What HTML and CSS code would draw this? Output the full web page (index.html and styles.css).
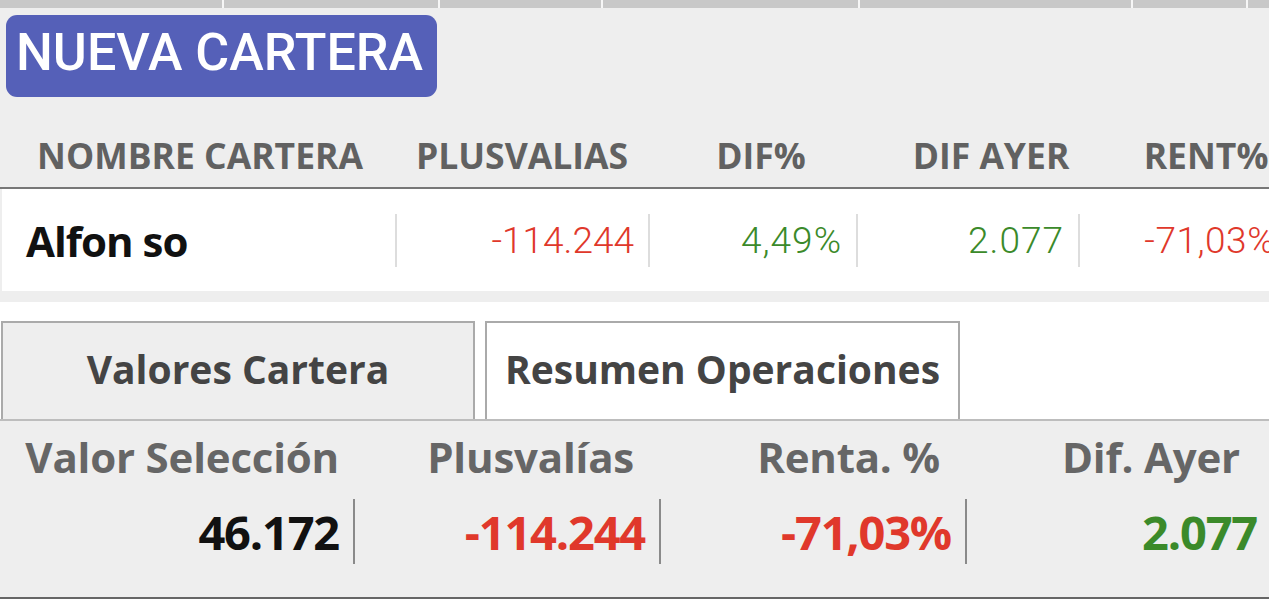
FILE: index.html
```html
<!DOCTYPE html>
<html lang="es">
<head>
<meta charset="utf-8">
<title>Cartera</title>
<link rel="stylesheet" href="styles.css">
</head>
<body>
<div class="page">
  <div class="topstrip">
    <span></span><span></span><span></span><span></span><span></span><span></span><span></span>
  </div>
  <div class="btn-row">
    <button class="btn-new">NUEVA CARTERA</button>
  </div>
  <div class="thead">
    <div class="th">NOMBRE CARTERA</div>
    <div class="th">PLUSVALIAS</div>
    <div class="th">DIF%</div>
    <div class="th">DIF AYER</div>
    <div class="th">RENT%</div>
  </div>
  <div class="trow">
    <div class="td name">Alfon so</div>
    <div class="td num red">-114.244</div>
    <div class="td num green">4,49%</div>
    <div class="td num green">2.077</div>
    <div class="td num red last">-71,03%</div>
  </div>
  <div class="tabs">
    <div class="tab">Valores Cartera</div>
    <div class="tab active">Resumen Operaciones</div>
  </div>
  <div class="summary">
    <div class="labels">
      <div class="lbl">Valor Selección</div>
      <div class="lbl">Plusvalías</div>
      <div class="lbl">Renta. %</div>
      <div class="lbl">Dif. Ayer</div>
    </div>
    <div class="values">
      <div class="val black">46.172</div>
      <div class="val red">-114.244</div>
      <div class="val red">-71,03%</div>
      <div class="val green last">2.077</div>
    </div>
  </div>
</div>
</body>
</html>
```

FILE: styles.css
```css
html, body {
  margin: 0;
  padding: 0;
  background: #eeeeee;
}
body {
  width: 1269px;
  height: 599px;
  overflow: hidden;
}
.page {
  width: 1269px;
  overflow: hidden;
  font-family: "Open Sans", "Noto Sans", sans-serif;
}

/* top strip (cut-off toolbar) */
.topstrip {
  display: flex;
  gap: 2px;
  height: 8px;
  background: #f6f6f6;
}
.topstrip span {
  background: #c8c8c8;
  flex: none;
}
.topstrip span:nth-child(1) { width: 222px; }
.topstrip span:nth-child(2) { width: 214px; }
.topstrip span:nth-child(3) { width: 161px; }
.topstrip span:nth-child(4) { width: 255px; }
.topstrip span:nth-child(5) { width: 271px; }
.topstrip span:nth-child(6) { width: 113px; }
.topstrip span:nth-child(7) { flex: 1; }

/* button */
.btn-row {
  padding: 7px 0 0 6px;
  height: 82px;
}
.btn-new {
  width: 431px;
  height: 82px;
  border: none;
  border-radius: 11px;
  background: #5560b8;
  color: #ffffff;
  font-family: Roboto, "Noto Sans", sans-serif;
  font-weight: 500;
  font-size: 52px;
  line-height: 1;
  padding: 0 4px 6px 0;
  text-align: center;
}

/* table header */
.thead {
  display: grid;
  grid-template-columns: 400px 244px 234px 226px 204px;
  height: 92px;
  box-sizing: border-box;
  align-items: end;
  padding-bottom: 8px;
  border-bottom: 2px solid #777777;
  width: 1308px;
}
.th {
  text-align: center;
  font-weight: 700;
  font-size: 35.5px;
  line-height: 48px;
  color: #616161;
  white-space: nowrap;
}

/* data row */
.trow {
  display: grid;
  grid-template-columns: 395px 253px 208px 222px 209px;
  margin-left: 2px;
  background: #ffffff;
  height: 102px;
  align-items: center;
  width: 1287px;
}
.td {
  height: 53px;
  display: flex;
  align-items: center;
  border-right: 2px solid #dddddd;
  white-space: nowrap;
}
.td.last { border-right: none; }
.name {
  padding-left: 24px;
  font-weight: 700;
  font-size: 42px;
  letter-spacing: -1px;
  color: #111111;
}
.num {
  justify-content: flex-end;
  padding-right: 14px;
  font-family: Roboto, "Noto Sans", sans-serif;
  font-weight: 300;
  font-size: 37px;
}
.num.green { letter-spacing: 1px; }
.num.last { letter-spacing: 0.5px; }
.red { color: #e0382b; }
.green { color: #3b8a2a; }
.black { color: #111111; }

/* tabs */
.tabs {
  margin-top: 11px;
  background: #ffffff;
  display: flex;
  gap: 10px;
  padding: 19px 0 0 1px;
  border-bottom: 2px solid #bdbdbd;
}
.tab {
  width: 474px;
  height: 98px;
  box-sizing: border-box;
  border: 2px solid #aaaaaa;
  border-bottom: none;
  background: #eeeeee;
  display: flex;
  align-items: center;
  justify-content: center;
  padding-bottom: 5px;
  font-weight: 700;
  font-size: 39px;
  color: #444444;
}
.tab.active {
  width: 475px;
  background: #ffffff;
}

/* summary */
.summary {
  height: 178px;
  box-sizing: border-box;
  border-bottom: 2px solid #666666;
  padding-top: 8px;
}
.labels, .values {
  display: grid;
  grid-template-columns: 355px 306px 306px 306px;
}
.lbl {
  text-align: right;
  font-weight: 700;
  font-size: 42px;
  line-height: 56px;
  letter-spacing: -0.2px;
  color: #666666;
  white-space: nowrap;
}
.lbl:nth-child(1) { padding-right: 16px; }
.lbl:nth-child(2) { padding-right: 27px; }
.lbl:nth-child(3) { padding-right: 27px; }
.lbl:nth-child(4) { padding-right: 33px; }
.values {
  margin-top: 14px;
}
.val {
  height: 65px;
  display: flex;
  align-items: center;
  justify-content: flex-end;
  padding-right: 14px;
  border-right: 2px solid #8a8a8a;
  font-weight: 700;
  font-size: 47px;
  letter-spacing: -1.2px;
  white-space: nowrap;
}
.val.last {
  border-right: none;
  padding-right: 16px;
}
```
